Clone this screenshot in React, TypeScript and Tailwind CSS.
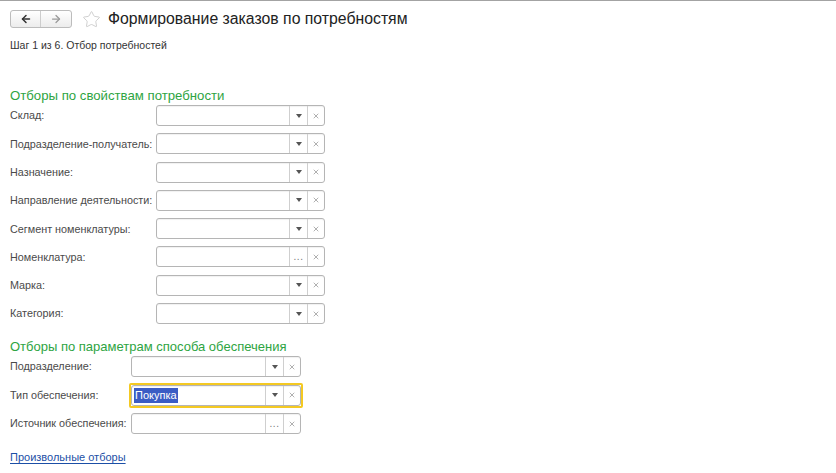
import { ArrowLeft, ArrowRight, Star, X } from 'lucide-react';

type FieldKind = 'select' | 'pick';

function Field({ kind, value, focused, width }: { kind: FieldKind; value?: string; focused?: boolean; width: string }) {
  const box = (
    <div className={`flex h-[21px] ${width} rounded-[3px] border border-[#b5b5b5] bg-white shadow-[inset_0_1px_1px_rgba(0,0,0,0.06)]`}>
      <div className="flex flex-1 items-center px-[2px]">
        {value && (
          <span className="bg-[#3b5cc4] px-[1px] text-[11px] leading-[15px] text-white">{value}</span>
        )}
      </div>
      <div className="flex w-[18px] items-center justify-center border-l border-[#cfcfcf]">
        {kind === 'select' ? (
          <svg width="6" height="4" viewBox="0 0 6 4"><path d="M0 0h6L3 4z" fill="#555" /></svg>
        ) : (
          <span className="text-[10px] leading-none tracking-[0.5px] text-[#777]">...</span>
        )}
      </div>
      <div className="flex w-[17px] items-center justify-center border-l border-[#cfcfcf]">
        <X size={8} strokeWidth={2} className="text-[#888]" />
      </div>
    </div>
  );
  if (focused) {
    return <div className="-m-[2px] rounded-[2px] border-2 border-[#f4c922]">{box}</div>;
  }
  return box;
}

function Row({ label, labelW, kind, value, focused, fieldW }: { label: string; labelW: string; kind: FieldKind; value?: string; focused?: boolean; fieldW: string }) {
  return (
    <div className="flex h-[21px] items-center">
      <div className={`${labelW} whitespace-nowrap text-[10.8px] text-[#4a4a4a]`}>{label}</div>
      <Field kind={kind} value={value} focused={focused} width={fieldW} />
    </div>
  );
}

const needs: { label: string; kind: FieldKind }[] = [
  { label: 'Склад:', kind: 'select' },
  { label: 'Подразделение-получатель:', kind: 'select' },
  { label: 'Назначение:', kind: 'select' },
  { label: 'Направление деятельности:', kind: 'select' },
  { label: 'Сегмент номенклатуры:', kind: 'select' },
  { label: 'Номенклатура:', kind: 'pick' },
  { label: 'Марка:', kind: 'select' },
  { label: 'Категория:', kind: 'select' },
];

export default function App() {
  return (
    <div className="h-[473px] w-[836px] overflow-hidden border-t border-[#a3a3a3] bg-white font-['Liberation_Sans',Arial,sans-serif]">
      <div className="flex items-center px-[10px] pt-[8px]">
        <div className="flex h-[18px] rounded-[3px] border border-[#bcbcbc] bg-gradient-to-b from-white to-[#ececec]">
          <div className="flex w-[30px] items-center justify-center border-r border-[#cdcdcd]">
            <ArrowLeft size={12} strokeWidth={3} className="text-[#333]" />
          </div>
          <div className="flex w-[30px] items-center justify-center">
            <ArrowRight size={12} strokeWidth={2.5} className="text-[#9a9a9a]" />
          </div>
        </div>
        <Star size={19} strokeWidth={1} className="ml-[10px] text-[#c4c4c4]" />
        <h1 className="ml-[7px] text-[15.8px] leading-[20px] text-[#222]">Формирование заказов по потребностям</h1>
      </div>
      <div className="mt-[9px] px-[10px] text-[10.5px] leading-[14px] text-[#333]">Шаг 1 из 6. Отбор потребностей</div>

      <div className="mt-[35px] px-[10px] text-[13.2px] leading-[17px] text-[#2ea442]">Отборы по свойствам потребности</div>
      <div className="mt-[1px] flex flex-col gap-[7.3px] px-[10px]">
        {needs.map((r) => (
          <Row key={r.label} label={r.label} labelW="w-[146px]" kind={r.kind} fieldW="w-[169px]" />
        ))}
      </div>

      <div className="mt-[14px] px-[10px] text-[13px] leading-[17px] text-[#2ea442]">Отборы по параметрам способа обеспечения</div>
      <div className="mt-[1px] flex flex-col gap-[7.5px] px-[10px]">
        <Row label="Подразделение:" labelW="w-[121px]" kind="select" fieldW="w-[170px]" />
        <Row label="Тип обеспечения:" labelW="w-[121px]" kind="select" fieldW="w-[170px]" value="Покупка" focused />
        <Row label="Источник обеспечения:" labelW="w-[121px]" kind="pick" fieldW="w-[170px]" />
      </div>

      <div className="mt-[10px] px-[10px]">
        <a className="text-[11px] text-[#1c4fa6] underline underline-offset-2">Произвольные отборы</a>
      </div>
    </div>
  );
}
